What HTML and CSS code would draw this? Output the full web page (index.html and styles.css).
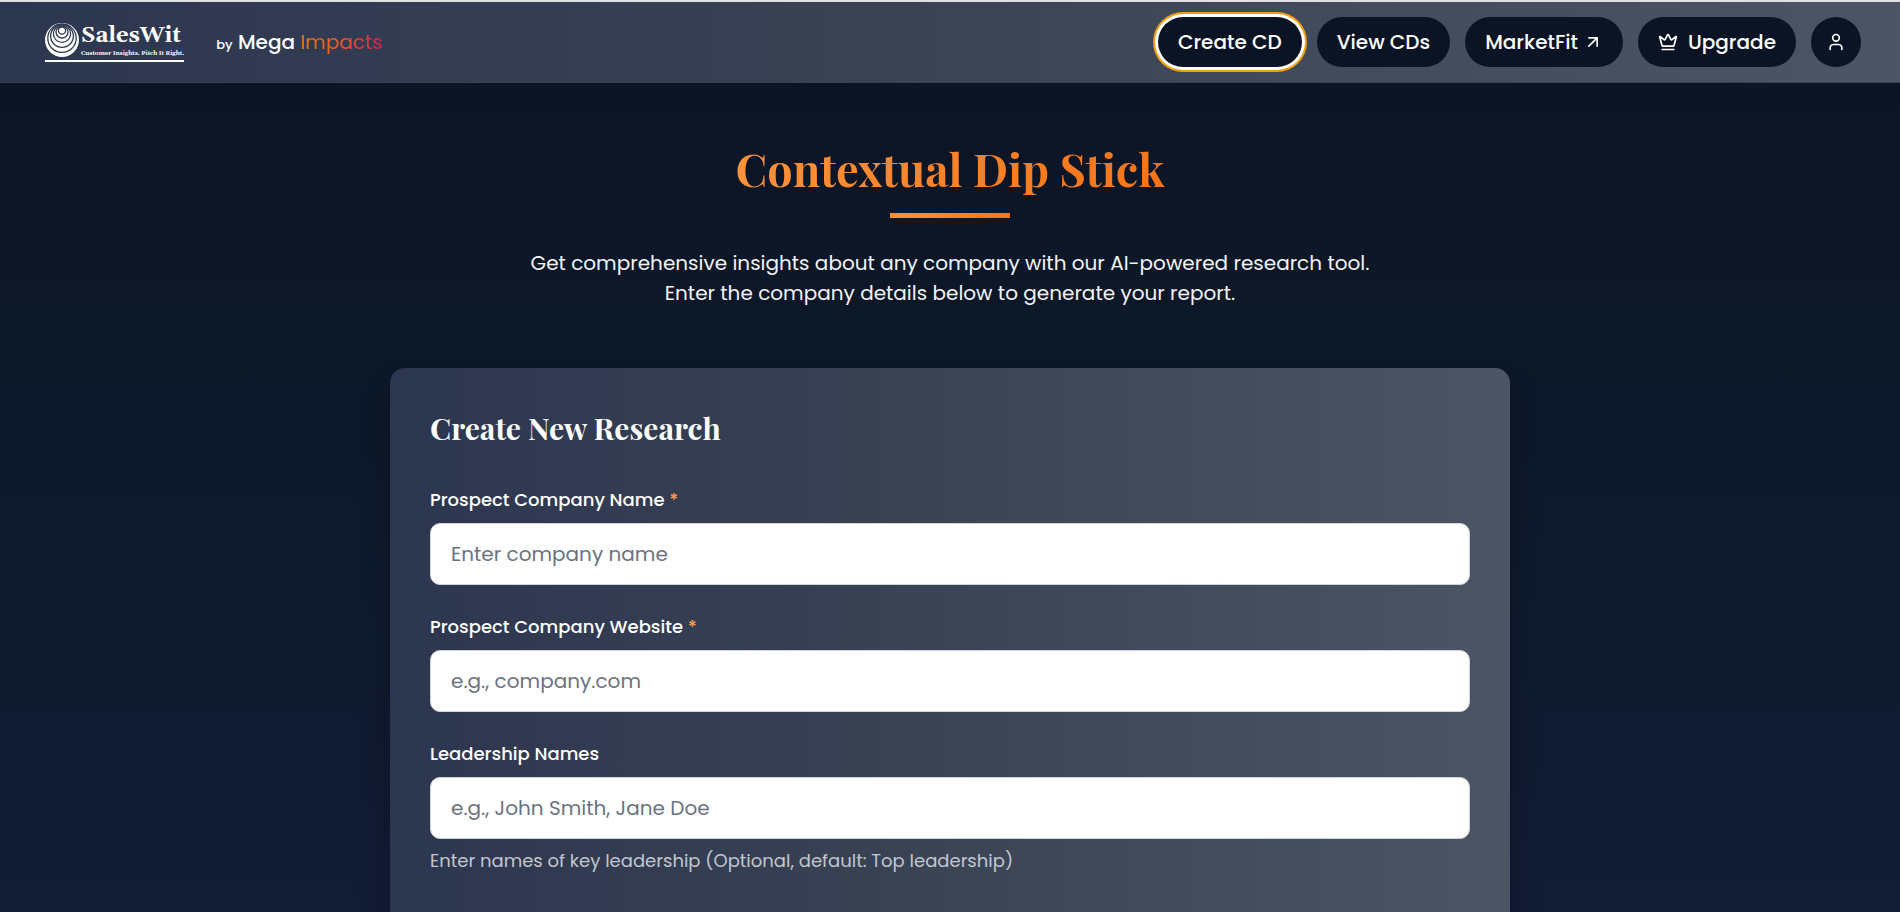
FILE: index.html
```
<!DOCTYPE html>
<html lang="en">
<head>
<meta charset="utf-8">
<meta name="viewport" content="width=device-width, initial-scale=1">
<title>SalesWit – Contextual Dip Stick</title>
<link rel="stylesheet" href="styles.css">
</head>
<body>
<header class="topbar">
  <div class="brand">
    <a class="logo" href="#" aria-label="SalesWit home">
      <span class="logo-row">
        <svg class="logo-mark" viewBox="0 0 34 34" aria-hidden="true">
          <circle cx="17" cy="17" r="17" fill="#fff"/>
          <g fill="none" stroke="#2f3a50" stroke-width="1.3">
            <circle cx="17" cy="15.2" r="14.2"/>
            <circle cx="17" cy="13" r="11.4"/>
            <circle cx="17" cy="10.8" r="8.6"/>
            <circle cx="17" cy="9" r="6"/>
            <circle cx="17" cy="7.6" r="3.6"/>
          </g>
        </svg>
        <span class="logo-words">
          <span class="logo-name">SalesWit</span>
          <span class="logo-tag">Customer Insights. Pitch It Right.</span>
        </span>
      </span>
    </a>
    <span class="byline"><span class="by">by</span> <span class="mega">Mega</span> <span class="impacts">Impacts</span></span>
  </div>
  <nav class="nav">
    <button class="pill pill-active" type="button">Create CD</button>
    <button class="pill" type="button">View CDs</button>
    <button class="pill pill-tight" type="button">MarketFit
      <svg class="icon" viewBox="0 0 24 24" aria-hidden="true"><path d="M7 7h10v10M7 17 17 7"/></svg>
    </button>
    <button class="pill" type="button">
      <svg class="icon" viewBox="0 0 24 24" aria-hidden="true"><path d="M11.562 3.266a.5.5 0 0 1 .876 0L15.390 8.870a1 1 0 0 0 1.516.294L21.183 5.500a.5.5 0 0 1 .798.519l-2.834 10.246a1 1 0 0 1-.956.734H5.810a1 1 0 0 1-.957-.734L2.020 6.020a.5.5 0 0 1 .798-.519l4.276 3.664a1 1 0 0 0 1.516-.294zM5 21h14"/></svg>
      Upgrade</button>
    <button class="pill pill-round" type="button" aria-label="Account">
      <svg class="icon" viewBox="0 0 24 24" aria-hidden="true"><circle cx="12" cy="7" r="4"/><path d="M19 21v-2a4 4 0 0 0-4-4H9a4 4 0 0 0-4 4v2"/></svg>
    </button>
  </nav>
</header>
<main class="page">
  <h1 class="title">Contextual Dip Stick</h1>
  <div class="rule"></div>
  <p class="intro">Get comprehensive insights about any company with our AI-powered research tool.<br>Enter the company details below to generate your report.</p>
  <form class="card">
    <h2 class="card-title">Create New Research</h2>
    <div class="field">
      <label class="label" for="company">Prospect Company Name <span class="req">*</span></label>
      <input class="input" id="company" type="text" placeholder="Enter company name">
    </div>
    <div class="field">
      <label class="label" for="website">Prospect Company Website <span class="req">*</span></label>
      <input class="input" id="website" type="text" placeholder="e.g., company.com">
    </div>
    <div class="field">
      <label class="label" for="leaders">Leadership Names</label>
      <input class="input" id="leaders" type="text" placeholder="e.g., John Smith, Jane Doe">
      <p class="hint">Enter names of key leadership (Optional, default: Top leadership)</p>
    </div>
  </form>
</main>
</body>
</html>
```
FILE: styles.css
```
* {
  box-sizing: border-box;
}

body {
  margin: 0;
  height: 100vh;
  overflow: hidden;
  display: flex;
  flex-direction: column;
  font-family: Poppins, Inter, sans-serif;
  font-size: 20px;
  line-height: 30px;
  color: #fff;
  background: linear-gradient(#0b1423, #0d192b 50%, #121c35);
}

.topbar {
  flex: none;
  display: flex;
  align-items: center;
  justify-content: space-between;
  padding: 15px 39px 15px 45px;
  border-top: 2px solid #dfe1e5;
  border-bottom: 1px solid #374151;
  background: linear-gradient(90deg, #2d3650, #374153 40%, #4b5563);
}

.brand {
  display: flex;
  align-items: center;
  gap: 32px;
}

.logo {
  display: block;
  color: #fff;
  text-decoration: none;
  border-bottom: 2px solid #fff;
  padding-bottom: 3px;
}

.logo-row {
  display: flex;
  align-items: center;
  gap: 2px;
}

.logo-mark {
  width: 34px;
  height: 34px;
}

.logo-words {
  display: flex;
  flex-direction: column;
  font-family: Georgia, Gelasio, "Liberation Serif", serif;
  font-weight: 700;
}

.logo-name {
  font-size: 22px;
  line-height: 26px;
}

.logo-tag {
  font-size: 6px;
  line-height: 8px;
}

.byline {
  padding-top: 2px;
}

.by {
  font-size: 13px;
  font-weight: 500;
}

.mega {
  font-weight: 500;
}

.impacts {
  color: transparent;
  background: linear-gradient(90deg, #e8790c, #f05a28 50%, #e11d48);
  background-clip: text;
}

.nav {
  display: flex;
  gap: 15px;
}

.pill {
  display: flex;
  align-items: center;
  gap: 10px;
  height: 50px;
  padding: 0 20px;
  border: 0;
  border-radius: 25px;
  background: #0b1424;
  color: #fff;
  font: inherit;
  font-weight: 500;
}

.pill-tight {
  gap: 5px;
}

.pill-active {
  box-shadow: 0 0 0 3px #fff, 0 0 0 5px #f59e0b;
}

.pill-round {
  width: 50px;
  padding: 0;
  justify-content: center;
}

.icon {
  width: 20px;
  height: 20px;
  fill: none;
  stroke: currentColor;
  stroke-width: 2;
  stroke-linejoin: round;
  stroke-linecap: round;
}

.page {
  flex: 1;
  padding: 60px 40px 0;
  display: flex;
  flex-direction: column;
  align-items: center;
}

.title {
  margin: 0;
  font-family: "Playfair Display", "Liberation Serif", serif;
  font-size: 45px;
  font-weight: 700;
  line-height: 50px;
  padding-bottom: 5px;
  color: transparent;
  background: linear-gradient(90deg, #fb923c, #f97316);
  background-clip: text;
}

.rule {
  width: 120px;
  height: 5px;
  margin: 15px 0 30px;
  background: linear-gradient(90deg, #fb923c, #f97316);
}

.intro {
  margin: 0 0 60px;
  text-align: center;
  color: #f3f4f6;
}

.card {
  flex: 1 0 auto;
  width: 100%;
  max-width: 1120px;
  padding: 40px;
  border-radius: 15px 15px 0 0;
  background: linear-gradient(90deg, #2d3650, #374153 40%, #4b5563);
  box-shadow: 0 20px 30px rgba(0, 0, 0, 0.250);
}

.card-title {
  margin: 0 0 40px;
  font-family: "Playfair Display", "Liberation Serif", serif;
  font-size: 30px;
  font-weight: 700;
  line-height: 40px;
}

.field {
  display: flex;
  flex-direction: column;
  margin-bottom: 30px;
}

.label {
  margin-bottom: 11px;
  font-size: 18px;
  font-weight: 500;
  line-height: 24px;
}

.req {
  color: #fb9a50;
}

.input {
  height: 62px;
  padding: 0 20px;
  border: 1px solid #d1d5db;
  border-radius: 10px;
  background: #fff;
  color: #111827;
  font: inherit;
}

.input::placeholder {
  color: #6b7280;
}

.hint {
  margin: 10px 0 0;
  font-size: 18px;
  line-height: 24px;
  color: #c3c7ce;
}
```
